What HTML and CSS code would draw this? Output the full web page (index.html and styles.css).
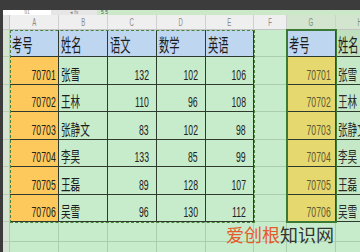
FILE: index.html
```html
<!DOCTYPE html>
<html lang="zh">
<head>
<meta charset="utf-8">
<link rel="stylesheet" href="styles.css">
</head>
<body>
<div class="topbar"></div>
<div class="fbar">
  <div class="namebox"><span>91</span></div>
  <div class="fx"><span>◂ fx</span></div>
  <div class="formula"><span>5 5</span></div>
</div>
<div class="sheet">
  <div class="corner"></div>
  <div class="ch"><span>A</span></div>
  <div class="ch"><span>B</span></div>
  <div class="ch"><span>C</span></div>
  <div class="ch"><span>D</span></div>
  <div class="ch"><span>E</span></div>
  <div class="ch"><span>F</span></div>
  <div class="ch sel"><span>G</span></div>
  <div class="ch sel"><span>H</span></div>

  <div class="rh"></div>
  <div class="cell hd"><span class="zh-h">考号</span></div>
  <div class="cell hd"><span class="zh-h">姓名</span></div>
  <div class="cell hd"><span class="zh-h">语文</span></div>
  <div class="cell hd"><span class="zh-h">数学</span></div>
  <div class="cell hd"><span class="zh-h">英语</span></div>
  <div class="cell e"></div>
  <div class="cell ghd"><span class="zh-h">考号</span></div>
  <div class="cell hhd"><span class="zh-h">姓名</span></div>

  <div class="rh"></div>
  <div class="cell id"><span class="num">70701</span></div>
  <div class="cell nm"><span class="zh">张雪</span></div>
  <div class="cell n"><span class="num">132</span></div>
  <div class="cell n"><span class="num">102</span></div>
  <div class="cell n"><span class="num">106</span></div>
  <div class="cell e"></div>
  <div class="cell gid"><span class="num">70701</span></div>
  <div class="cell gnm"><span class="zh">张雪</span></div>

  <div class="rh"></div>
  <div class="cell id"><span class="num">70702</span></div>
  <div class="cell nm"><span class="zh">王林</span></div>
  <div class="cell n"><span class="num">110</span></div>
  <div class="cell n"><span class="num">96</span></div>
  <div class="cell n"><span class="num">108</span></div>
  <div class="cell e"></div>
  <div class="cell gid"><span class="num">70702</span></div>
  <div class="cell gnm"><span class="zh">王林</span></div>

  <div class="rh"></div>
  <div class="cell id"><span class="num">70703</span></div>
  <div class="cell nm"><span class="zh">张静文</span></div>
  <div class="cell n"><span class="num">83</span></div>
  <div class="cell n"><span class="num">102</span></div>
  <div class="cell n"><span class="num">98</span></div>
  <div class="cell e"></div>
  <div class="cell gid"><span class="num">70703</span></div>
  <div class="cell gnm"><span class="zh">张静文</span></div>

  <div class="rh"></div>
  <div class="cell id"><span class="num">70704</span></div>
  <div class="cell nm"><span class="zh">李昊</span></div>
  <div class="cell n"><span class="num">133</span></div>
  <div class="cell n"><span class="num">85</span></div>
  <div class="cell n"><span class="num">99</span></div>
  <div class="cell e"></div>
  <div class="cell gid"><span class="num">70704</span></div>
  <div class="cell gnm"><span class="zh">李昊</span></div>

  <div class="rh"></div>
  <div class="cell id"><span class="num">70705</span></div>
  <div class="cell nm"><span class="zh">王磊</span></div>
  <div class="cell n"><span class="num">89</span></div>
  <div class="cell n"><span class="num">128</span></div>
  <div class="cell n"><span class="num">107</span></div>
  <div class="cell e"></div>
  <div class="cell gid"><span class="num">70705</span></div>
  <div class="cell gnm"><span class="zh">王磊</span></div>

  <div class="rh"></div>
  <div class="cell id"><span class="num">70706</span></div>
  <div class="cell nm"><span class="zh">吴雪</span></div>
  <div class="cell n"><span class="num">96</span></div>
  <div class="cell n"><span class="num">130</span></div>
  <div class="cell n"><span class="num">112</span></div>
  <div class="cell e"></div>
  <div class="cell gid"><span class="num">70706</span></div>
  <div class="cell gnm"><span class="zh">吴雪</span></div>

  <div class="rh"></div>
  <div class="cell e"></div><div class="cell e"></div><div class="cell e"></div><div class="cell e"></div>
  <div class="cell e"></div><div class="cell e"></div><div class="cell e"></div><div class="cell e"></div>

  <div class="rh"></div>
  <div class="cell e"></div><div class="cell e"></div><div class="cell e"></div><div class="cell e"></div>
  <div class="cell e"></div><div class="cell e"></div><div class="cell e"></div><div class="cell e"></div>

  <div class="copy-marquee"></div>
  <div class="selection"></div>
</div>
<div class="watermark"><span class="wm-a">爱创根</span><span class="wm-b">知识网</span></div>
</body>
</html>
```

FILE: styles.css
```css
* { box-sizing: border-box; margin: 0; padding: 0; }
html, body { width: 360px; height: 252px; overflow: hidden; background: #c7eccb; }
body { position: relative; font-family: "Noto Sans CJK SC", sans-serif; }

.topbar { height: 10px; background: #3c3c3c; }

.fbar { display: flex; height: 5px; overflow: hidden; background: #3c3c3c; padding-left: 3px; }
.fbar > div { display: flex; align-items: center; overflow: hidden; font-family: "Liberation Sans", sans-serif; font-size: 5px; line-height: 5px; }
.namebox { width: 48px; background: #fff; justify-content: center; color: #9a9a9a; }
.fx { width: 46px; background: #e6e6e6; justify-content: center; color: #777; }
.formula { flex: 1; background: #cbe9c8; color: #555; padding-left: 4px; }

.sheet {
  position: relative;
  display: grid;
  grid-template-columns: 7px 49px 49px 49px 49px 48px 33px 49px 49px;
  grid-template-rows: 15px 27px repeat(6, 27.5px) 20px 20px;
  border-left: 3px solid #3c3c3c;
  width: 360px;
  overflow: hidden;
}

.corner { background: #e4e4e4; border-right: 1px solid #c8c8c8; border-bottom: 1px solid #c8c8c8; }
.ch {
  background: #efefef;
  border-right: 1px solid #d0d0d0;
  border-bottom: 1px solid #c4c4c4;
  display: flex; align-items: center; justify-content: center;
  font-family: "Liberation Sans", sans-serif; font-size: 10px; color: #8a8a8a;
}
.ch span { display: inline-block; transform: scaleX(0.6); }
.ch.sel { background: #d3e4cf; color: #7a9078; }

.rh { background: #d4e4d1; border-bottom: 1px solid #bccdb9; border-right: 1px solid #b5c8b2; }

.cell {
  display: flex; align-items: flex-end;
  padding: 0 2px 3px 2px;
  background: #c7eccb;
  border-right: 1px solid #aacdac;
  border-bottom: 1px solid #aacdac;
  white-space: nowrap;
}

.hd { background: #bed6ef; border-right-color: #2e3a2e; border-bottom-color: #2e3a2e; }
.id { background: #fec95c; border-right-color: #2e3a2e; border-bottom-color: #2e3a2e; justify-content: flex-end; color: #222; }
.nm { border-right-color: #2e3a2e; border-bottom-color: #2e3a2e; color: #1c1c1c; }
.n { border-right-color: #2e3a2e; border-bottom-color: #2e3a2e; justify-content: flex-end; padding-right: 7px; color: #222; }

.ghd { background: #bed6ef; border-right-color: #3a4a3a; border-bottom-color: #2e3a2e; }
.hhd { background: #c0dfbe; border-bottom-color: #2e3a2e; }
.gid { background: #e5d86e; border-right-color: #3a4a3a; border-bottom-color: #2e3a2e; justify-content: flex-end; padding-right: 4px; color: #5f5832; }
.gnm { background: #c5e9c6; border-bottom-color: #2e3a2e; color: #2a2a2a; overflow: hidden; }

.zh-h { display: inline-block; font-size: 18px; line-height: 18px; transform: scaleX(0.57); transform-origin: left bottom; color: #1c1c1c; }
.zh { display: inline-block; font-size: 15px; line-height: 15px; transform: scaleX(0.64); transform-origin: left bottom; }
.num { display: inline-block; font-family: "Liberation Sans", sans-serif; font-size: 15px; line-height: 13px; transform: scaleX(0.58); transform-origin: right bottom; }

.copy-marquee {
  position: absolute;
  left: 7px; top: 15px;
  width: 245px; height: 193px;
  border: 1px dashed #4a8038;
  pointer-events: none;
}
.selection {
  position: absolute;
  left: 283px; top: 14px;
  width: 51px; height: 194px;
  border: 2px solid #3b7a35;
  border-right-width: 1px;
  pointer-events: none;
}

.watermark {
  position: absolute;
  left: 226px; top: 224px;
  font-size: 18px; line-height: 20px;
  font-family: "Noto Sans CJK SC", sans-serif;
  white-space: nowrap;
}
.wm-a { color: #e8592b; }
.wm-b { color: #333; }
```
